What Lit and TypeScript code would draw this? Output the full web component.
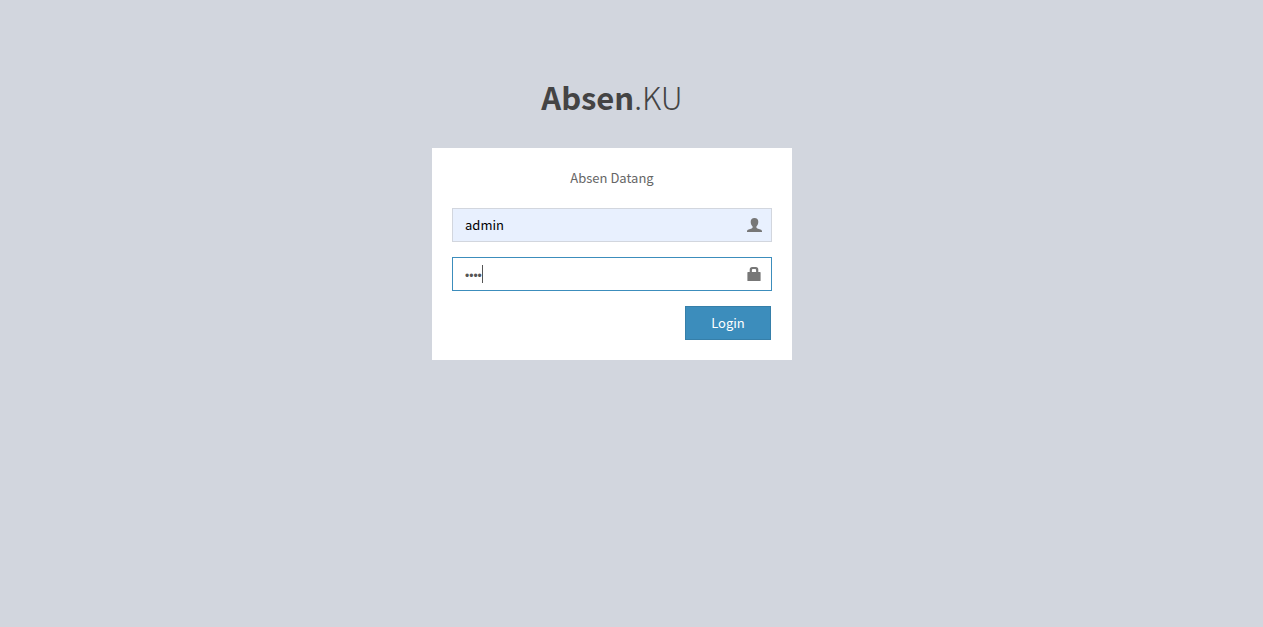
import { LitElement, html, css } from "lit";
import { customElement, state } from "lit/decorators.js";

@customElement("app-root")
class AppRoot extends LitElement {
  static styles = css`
    :host {
      display: block;
      box-sizing: border-box;
      min-height: 100vh;
      padding: 74px 39px 40px 0;
      background: #d2d6de;
      color: #666;
      font-family: "Source Sans Pro", "Noto Sans CJK SC", sans-serif;
      font-size: 13px;
      line-height: 20px;
    }
    * {
      box-sizing: border-box;
    }
    .box {
      max-width: 360px;
      margin: 0 auto;
    }
    .logo {
      margin: 0 0 29px;
      text-align: center;
      font-size: 31px;
      line-height: 45px;
      font-weight: 300;
    }
    .logo a {
      color: #444;
      text-decoration: none;
    }
    .logo b {
      font-weight: 700;
    }
    .card {
      display: flex;
      flex-direction: column;
      gap: 15px;
      padding: 20px;
      background: #fff;
    }
    .message {
      margin: 0 0 5px;
      text-align: center;
    }
    .field {
      position: relative;
    }
    .control {
      display: block;
      width: 100%;
      height: 34px;
      padding: 5px 42px 7px 12px;
      border: 1px solid #d2d6de;
      border-radius: 0;
      outline: none;
      background: #fff;
      color: #555;
      caret-color: transparent;
      font: inherit;
    }
    .filled {
      background: #e8f0fe;
      color: #000;
    }
    .active {
      padding: 8px 42px 4px 12px;
      border-color: #3c8dbc;
      font-family: "Liberation Sans", Arial, sans-serif;
      font-size: 12px;
    }
    .caret {
      position: absolute;
      left: 30px;
      top: 8px;
      width: 1px;
      height: 18px;
      background: #555;
    }
    .icon {
      position: absolute;
      right: 10px;
      top: 10px;
      width: 15px;
      height: 14px;
      fill: #777;
      pointer-events: none;
    }
    .actions {
      display: flex;
      justify-content: flex-end;
      padding-right: 1px;
    }
    .login {
      width: 86px;
      height: 34px;
      padding: 0;
      border: 1px solid #367fa9;
      border-radius: 0;
      background: #3c8dbc;
      color: #fff;
      font: inherit;
      cursor: pointer;
    }
  `;

  @state() private typing = true;

  private hideCaret() {
    this.typing = false;
  }

  render() {
    return html`
      <main class="box">
        <h1 class="logo"><a href="#"><b>Absen</b>.KU</a></h1>
        <form class="card" @submit=${(e: Event) => e.preventDefault()}>
          <p class="message">Absen Datang</p>
          <div class="field">
            <input class="control filled" type="text" aria-label="Username" value="admin" />
            <svg class="icon" viewBox="0 0 15 14" aria-hidden="true">
              <path d="M7.500 0C5 0 3.700 1.400 3.700 3.800C3.700 5.800 4.400 7.500 5.600 8.500V9.600C5.600 10.100 5.200 10.300 4.600 10.500L1.600 11.500C.5 11.900 0 12.400 0 13.200V14H15V13.200C15 12.400 14.500 11.900 13.400 11.500L10.400 10.500C9.800 10.300 9.400 10.100 9.400 9.600V8.500C10.600 7.500 11.300 5.800 11.300 3.800C11.300 1.400 10 0 7.500 0Z" />
            </svg>
          </div>
          <div class="field">
            <input class="control active" type="password" aria-label="Password" value="1234" @input=${this.hideCaret} />
            ${this.typing ? html`<span class="caret"></span>` : ""}
            <svg class="icon" viewBox="0 0 15 14" aria-hidden="true">
              <path fill-rule="evenodd" d="M2.700 5V2.500Q2.700 0 5.200 0H8.800Q11.300 0 11.300 2.500V5H13Q13.600 5 13.600 5.600V13.400Q13.600 14 13 14H1Q.4 14 .4 13.400V5.600Q.4 5 1 5ZM4.900 5H9.100V3Q9.100 2 8.100 2H5.900Q4.900 2 4.900 3Z" />
            </svg>
          </div>
          <div class="actions"><button class="login" type="submit">Login</button></div>
        </form>
      </main>
    `;
  }
}
